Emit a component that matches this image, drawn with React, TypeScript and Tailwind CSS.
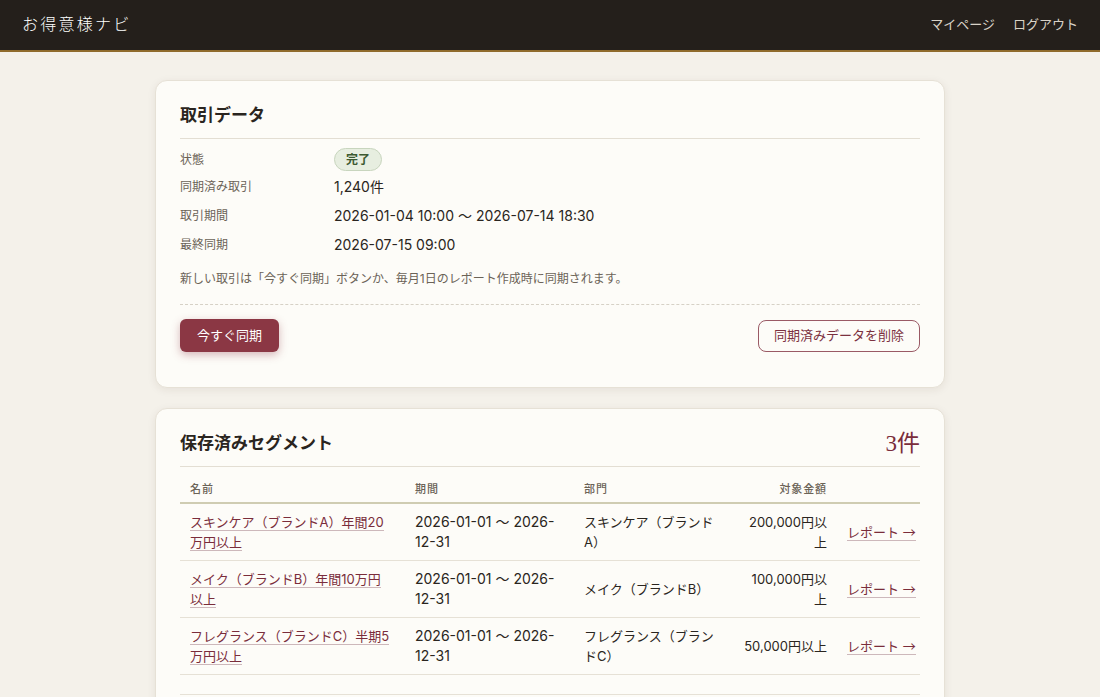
const sans = { fontFamily: 'Inter, "Noto Sans CJK JP", "Noto Sans", sans-serif' };
const serif = { fontFamily: '"Liberation Serif", "Noto Sans CJK JP", serif' };
const cjk = { fontFamily: '"Noto Sans CJK JP", sans-serif' };

const summary = [
  { label: '同期済み取引', value: '1,240件' },
  { label: '取引期間', value: '2026-01-04 10:00 〜 2026-07-14 18:30' },
  { label: '最終同期', value: '2026-07-15 09:00' },
];

const segments = [
  {
    name: 'スキンケア（ブランドA）年間20万円以上',
    period: '2026-01-01 〜 2026-12-31',
    dept: 'スキンケア（ブランドA）',
    amount: '200,000円以上',
  },
  {
    name: 'メイク（ブランドB）年間10万円以上',
    period: '2026-01-01 〜 2026-12-31',
    dept: 'メイク（ブランドB）',
    amount: '100,000円以上',
  },
  {
    name: 'フレグランス（ブランドC）半期5万円以上',
    period: '2026-01-01 〜 2026-12-31',
    dept: 'フレグランス（ブランドC）',
    amount: '50,000円以上',
  },
];

export default function App() {
  return (
    <div className="min-h-screen bg-[#f4f1ea] text-[#2a2520]" style={sans}>
      {/* Header */}
      <header className="h-[52px] bg-[#241f1b] border-b-2 border-[#8f6b2c] flex items-center justify-between px-[22px]">
        <div className="text-white text-[16px] tracking-[0.14em] font-light" style={serif}>お得意様ナビ</div>
        <nav className="flex gap-[18px] text-[13px] text-[#d9d3c8]">
          <a>マイページ</a>
          <a>ログアウト</a>
        </nav>
      </header>

      <main className="w-[790px] mx-auto pt-[28px] flex flex-col gap-[20px]">
        {/* Transaction data */}
        <section className="bg-[#fdfcf8] border border-[#e6e1d6] rounded-[12px] shadow-[0_2px_8px_rgba(60,40,20,0.08)] px-[24px] pt-[23px] pb-[35px]">
          <h2 className="text-[17px] font-bold pb-[10px] border-b border-[#e3ded3] leading-[24px]" style={serif}>取引データ</h2>
          <div className="mt-[8px] flex flex-col">
            <div className="flex items-center h-[25px]">
              <div className="w-[154px] text-[12px] text-[#6b6357]">状態</div>
              <span className="h-[23px] px-[11px] rounded-full bg-[#e7eee0] border border-[#c8d5be] text-[#3c5a31] text-[12px] font-bold flex items-center">完了</span>
            </div>
            {summary.map((r) => (
              <div key={r.label} className="flex items-center h-[29px]">
                <div className="w-[154px] text-[12px] text-[#6b6357]">{r.label}</div>
                <div className="text-[14px] text-[#2a2520]">{r.value}</div>
              </div>
            ))}
          </div>
          <p className="mt-[11px] text-[12px] text-[#6b6357] pb-[16px] border-b border-dashed border-[#d6d1c6]">
            新しい取引は「今すぐ同期」ボタンか、毎月1日のレポート作成時に同期されます。
          </p>
          <div className="mt-[14px] flex items-center justify-between">
            <button className="h-[33px] px-[17px] rounded-[6px] bg-[#8b3744] text-white text-[13px] shadow-[0_3px_8px_rgba(139,55,68,0.35)]">
              今すぐ同期
            </button>
            <button className="h-[32px] px-[15px] rounded-[8px] border border-[#9a5a65] text-[#7c3140] text-[13px] bg-transparent">
              同期済みデータを削除
            </button>
          </div>
        </section>

        {/* Saved segments */}
        <section className="bg-[#fdfcf8] border border-[#e6e1d6] rounded-[12px] shadow-[0_2px_8px_rgba(60,40,20,0.08)] px-[24px] pt-[21px] pb-[24px]">
          <div className="flex items-end justify-between pb-[8px] border-b border-[#e3ded3]">
            <h2 className="text-[17px] font-bold leading-[28px]" style={serif}>保存済みセグメント</h2>
            <div className="text-[23px] text-[#7a2d3b] leading-[28px]" style={serif}>3件</div>
          </div>
          <table className="w-full table-fixed border-collapse text-[13px]">
            <colgroup>
              <col className="w-[225px]" />
              <col className="w-[169px]" />
              <col className="w-[155px]" />
              <col className="w-[108px]" />
              <col />
            </colgroup>
            <thead>
              <tr className="border-b-2 border-[#cfccb2] text-[11px] text-[#6b6357] tracking-[0.08em]">
                <th className="text-left font-medium px-[10px] pt-[14px] pb-[4px]">名前</th>
                <th className="text-left font-medium px-[10px] pt-[14px] pb-[4px]">期間</th>
                <th className="text-left font-medium px-[10px] pt-[14px] pb-[4px]">部門</th>
                <th className="text-right font-medium px-[10px] pt-[14px] pb-[4px]">対象金額</th>
                <th className="px-[10px]"></th>
              </tr>
            </thead>
            <tbody>
              {segments.map((s) => (
                <tr key={s.name} className="border-b border-[#e6e1d6] align-middle">
                  <td className="pl-[10px] pr-[15px] py-[8px] leading-[20px]">
                    <a className="text-[#7a2d3b] border-b border-[#cdb8bb]">{s.name}</a>
                  </td>
                  <td className="px-[10px] py-[8px] leading-[20px] text-[14px]">{s.period}</td>
                  <td className="px-[10px] py-[8px] leading-[20px]">{s.dept}</td>
                  <td className="px-[10px] py-[8px] leading-[20px] text-right">{s.amount}</td>
                  <td className="px-[10px] py-[8px] leading-[20px]">
                    <a className="text-[#7a2d3b] border-b border-[#cdb8bb] whitespace-nowrap">
                      レポート <span style={cjk}>→</span>
                    </a>
                  </td>
                </tr>
              ))}
              <tr className="border-b border-[#e6e1d6]">
                <td colSpan={5} className="h-[20px]"></td>
              </tr>
            </tbody>
          </table>
        </section>
      </main>
    </div>
  );
}
